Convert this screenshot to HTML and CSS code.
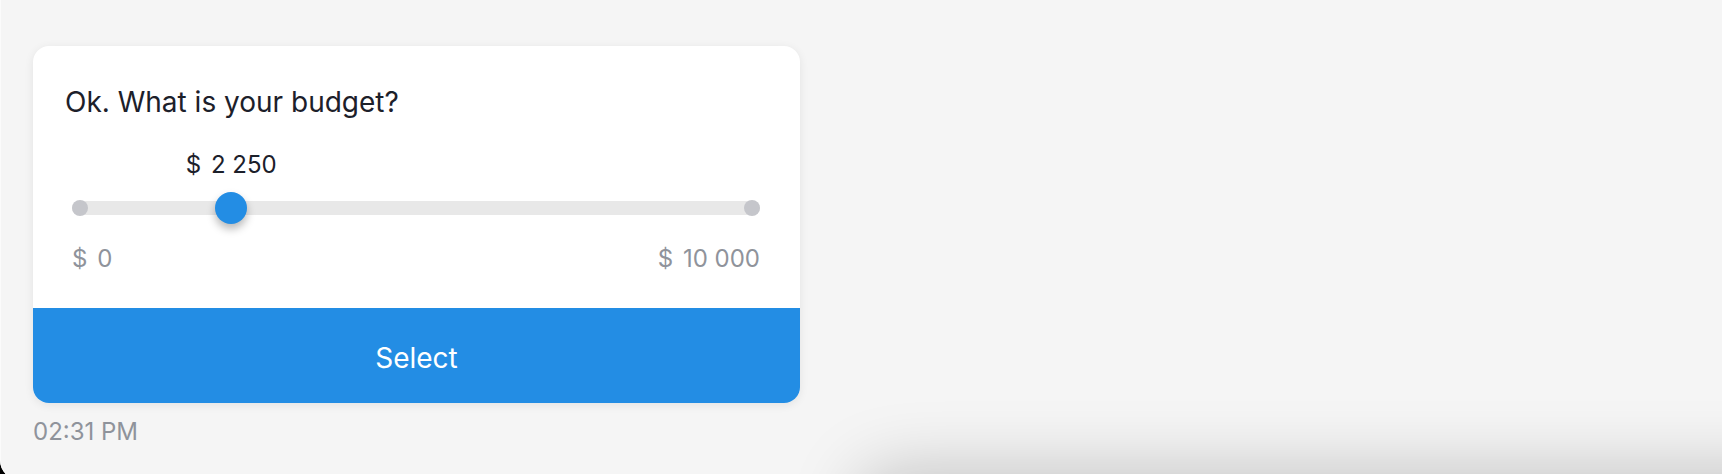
FILE: index.html
```html
<!DOCTYPE html>
<html lang="en">
<head>
<meta charset="utf-8">
<title>Budget</title>
<link rel="stylesheet" href="styles.css">
</head>
<body>
<div class="page">
  <div class="chat">
    <div class="card">
      <div class="card-body">
        <p class="question">Ok. What is your budget?</p>
        <div class="range">
          <div class="value-row">
            <div class="rail">
              <span class="range-value" style="left:22.5%"><span class="cur">$</span> 2 250</span>
            </div>
          </div>
          <div class="track-row">
            <div class="bar"></div>
            <span class="dot dot-start"></span>
            <span class="dot dot-end"></span>
            <div class="rail rail-abs">
              <span class="thumb" style="left:22.5%"></span>
            </div>
          </div>
          <div class="limits">
            <span><span class="cur">$</span> 0</span>
            <span><span class="cur">$</span> 10 000</span>
          </div>
        </div>
      </div>
      <button class="select-btn" type="button">Select</button>
    </div>
    <div class="time">02:31 PM</div>
  </div>
  <div class="dock-shadow"></div>
</div>
</body>
</html>
```

FILE: styles.css
```css
html {
  background: #000;
  overflow: hidden;
}
body {
  margin: 0;
  overflow: hidden;
  font-family: "Inter", "Noto Sans", sans-serif;
}
.page {
  position: relative;
  height: 480px;
  background: #f5f5f5;
  border-bottom-left-radius: 20px;
  box-shadow: inset 1px 0 0 #fbfbfb;
  padding: 46px 0 0 33px;
  box-sizing: border-box;
  overflow: hidden;
}
.chat {
  width: 767px;
}
.card {
  background: #fff;
  border-radius: 16px;
  box-shadow: 0 2px 10px rgba(0, 0, 0, 0.08);
  overflow: hidden;
}
.card-body {
  padding: 39px 32px 35px 32px;
}
.question {
  margin: 0;
  font-size: 28px;
  line-height: 34px;
  color: #1c202a;
}
.range {
  padding: 0 8px 0 7px;
}
.value-row {
  margin-top: 31px;
  height: 29px;
  padding: 0 8px;
}
.rail {
  position: relative;
  height: 100%;
}
.range-value {
  position: absolute;
  top: 0;
  transform: translateX(-50%);
  font-size: 24px;
  line-height: 29px;
  color: #1c202a;
  white-space: nowrap;
}
.cur {
  margin-right: 3px;
}
.track-row {
  position: relative;
  margin-top: 13px;
  height: 32px;
  display: flex;
  align-items: center;
}
.bar {
  flex: 1;
  height: 14px;
  border-radius: 7px;
  background: #e8e8e8;
}
.dot {
  position: absolute;
  top: 8px;
  width: 16px;
  height: 16px;
  border-radius: 50%;
  background: #c5c6cb;
}
.dot-start { left: 0; }
.dot-end { right: 0; }
.rail-abs {
  position: absolute;
  left: 8px;
  right: 8px;
  top: 0;
  bottom: 0;
}
.thumb {
  position: absolute;
  top: 0;
  width: 32px;
  height: 32px;
  margin-left: -16px;
  border-radius: 50%;
  background: #238de4;
  box-shadow: 0 5px 9px rgba(0, 0, 0, 0.28);
}
.limits {
  margin-top: 20px;
  display: flex;
  justify-content: space-between;
  font-size: 24px;
  line-height: 29px;
  color: #8f939b;
}
.select-btn {
  display: block;
  width: 100%;
  height: 95px;
  border: 0;
  margin: 0;
  padding: 5px 0 0 0;
  background: #238de4;
  color: #fff;
  font-family: inherit;
  font-size: 28px;
  line-height: 34px;
  cursor: pointer;
}
.time {
  margin-top: 14px;
  font-size: 24px;
  line-height: 29px;
  color: #8f939b;
}
.dock-shadow {
  position: absolute;
  left: 860px;
  top: 478px;
  width: 1000px;
  height: 200px;
  border-radius: 30px;
  background: #f5f5f5;
  box-shadow: 0 -6px 70px rgba(0, 0, 0, 0.22);
}
```
